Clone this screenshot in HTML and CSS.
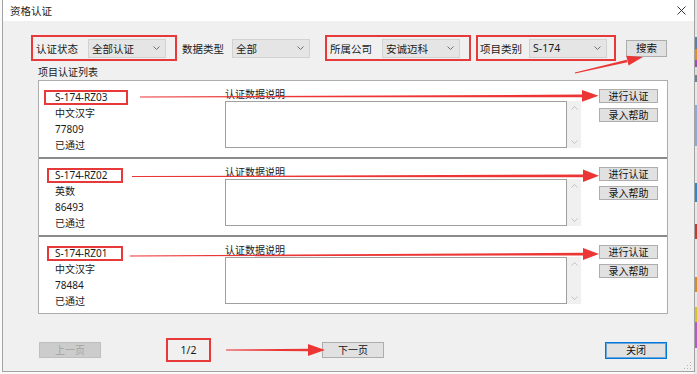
FILE: index.html
```html
<!DOCTYPE html>
<html lang="zh-CN">
  <head>
    <meta charset="utf-8">
    <title>资格认证</title>
    <link rel="stylesheet" href="styles.css">
  </head>
  <body>
    <div class="win">
      <div class="titlebar">
        <span class="title">资格认证</span>
        <svg class="x" width="9" height="9" viewBox="0 0 9 9"><path d="M0.5 0.5L8.5 8.5M8.5 0.5L0.5 8.5" stroke="#333" stroke-width="1" fill="none"/></svg>
      </div>
      <div class="content">
        <div class="filters">
          <div class="grp g1">
            <span class="lbl">认证状态</span>
            <div class="sel">全部认证<svg width="7" height="4" viewBox="0 0 7 4"><polyline points="0.5,0.5 3.5,3.5 6.5,0.5" fill="none" stroke="#707070"/></svg></div>
          </div>
          <span class="lbl l2">数据类型</span>
          <div class="sel s2">全部<svg width="7" height="4" viewBox="0 0 7 4"><polyline points="0.5,0.5 3.5,3.5 6.5,0.5" fill="none" stroke="#707070"/></svg></div>
          <div class="grp g2">
            <span class="lbl">所属公司</span>
            <div class="sel">安诚迈科<svg width="7" height="4" viewBox="0 0 7 4"><polyline points="0.5,0.5 3.5,3.5 6.5,0.5" fill="none" stroke="#707070"/></svg></div>
          </div>
          <div class="grp g3">
            <span class="lbl">项目类别</span>
            <div class="sel">S-174<svg width="7" height="4" viewBox="0 0 7 4"><polyline points="0.5,0.5 3.5,3.5 6.5,0.5" fill="none" stroke="#707070"/></svg></div>
          </div>
          <button type="button" class="btn search">搜索</button>
        </div>

        <div class="list-title">项目认证列表</div>
        <div class="list">
          <div class="panel">
            <div class="info">
              <div class="name n1">S-174-RZ03</div>
              <div>中文汉字</div>
              <div>77809</div>
              <div>已通过</div>
            </div>
            <div class="desc">
              <div class="desc-lbl">认证数据说明</div>
              <div class="desc-box">
                <div class="memo"></div>
                <div class="vscroll">
                  <svg width="7" height="4" viewBox="0 0 7 4"><polyline points="0.5,3.5 3.5,0.5 6.5,3.5" fill="none" stroke="#c2c2c2"/></svg>
                  <svg width="7" height="4" viewBox="0 0 7 4"><polyline points="0.5,0.5 3.5,3.5 6.5,0.5" fill="none" stroke="#c2c2c2"/></svg>
                </div>
              </div>
            </div>
            <div class="actions">
              <button type="button" class="btn small">进行认证</button>
              <button type="button" class="btn small">录入帮助</button>
            </div>
          </div>
          <div class="panel">
            <div class="info">
              <div class="name">S-174-RZ02</div>
              <div>英数</div>
              <div>86493</div>
              <div>已通过</div>
            </div>
            <div class="desc">
              <div class="desc-lbl">认证数据说明</div>
              <div class="desc-box">
                <div class="memo"></div>
                <div class="vscroll">
                  <svg width="7" height="4" viewBox="0 0 7 4"><polyline points="0.5,3.5 3.5,0.5 6.5,3.5" fill="none" stroke="#c2c2c2"/></svg>
                  <svg width="7" height="4" viewBox="0 0 7 4"><polyline points="0.5,0.5 3.5,3.5 6.5,0.5" fill="none" stroke="#c2c2c2"/></svg>
                </div>
              </div>
            </div>
            <div class="actions">
              <button type="button" class="btn small">进行认证</button>
              <button type="button" class="btn small">录入帮助</button>
            </div>
          </div>
          <div class="panel">
            <div class="info">
              <div class="name">S-174-RZ01</div>
              <div>中文汉字</div>
              <div>78484</div>
              <div>已通过</div>
            </div>
            <div class="desc">
              <div class="desc-lbl">认证数据说明</div>
              <div class="desc-box">
                <div class="memo"></div>
                <div class="vscroll">
                  <svg width="7" height="4" viewBox="0 0 7 4"><polyline points="0.5,3.5 3.5,0.5 6.5,3.5" fill="none" stroke="#c2c2c2"/></svg>
                  <svg width="7" height="4" viewBox="0 0 7 4"><polyline points="0.5,0.5 3.5,3.5 6.5,0.5" fill="none" stroke="#c2c2c2"/></svg>
                </div>
              </div>
            </div>
            <div class="actions">
              <button type="button" class="btn small">进行认证</button>
              <button type="button" class="btn small">录入帮助</button>
            </div>
          </div>
        </div>

        <div class="footer">
          <button type="button" class="btn wide prev" disabled>上一页</button>
          <span class="page">1/2</span>
          <button type="button" class="btn wide next">下一页</button>
          <button type="button" class="btn wide close">关闭</button>
        </div>
      </div>
    </div>

    <!-- annotation arrows drawn over the dialog -->
    <svg class="marks" width="697" height="374" viewBox="0 0 697 374">
      <g fill="#ec3535">
        <polygon points="575.1,73.4 574.9,72.6 626.7,59.7 627.3,62.3"/>
        <polygon points="626.3,55.8 643,57 628.5,65.6"/>
        <polygon points="140,96.6 583,94.6 583,97.2 140,97.4"/>
        <polygon points="582,90 598.5,95.8 582,101.8"/>
        <polygon points="132,176.1 583,174.6 583,177.2 132,176.9"/>
        <polygon points="583,169.5 599,175.8 583,182"/>
        <polygon points="130,255.6 583,252.8 583,255.4 130,256.4"/>
        <polygon points="583,248 599,254 583,260"/>
        <polygon points="226,349.6 309,348.7 309,351.3 226,350.4"/>
        <polygon points="308,344 325,350 308,356"/>
      </g>
      <g fill="#b4b4b4">
        <rect x="690" y="362" width="1" height="1"/>
        <rect x="687" y="365" width="1" height="1"/>
        <rect x="690" y="365" width="1" height="1"/>
        <rect x="684" y="368" width="1" height="1"/>
        <rect x="687" y="368" width="1" height="1"/>
        <rect x="690" y="368" width="1" height="1"/>
      </g>
    </svg>
  </body>
</html>
```

FILE: styles.css
```css
body {
  margin: 0;
  width: 697px;
  height: 374px;
  position: relative;
  overflow: hidden;
  font-family: "Noto Sans", "Noto Sans CJK SC", sans-serif;
  font-size: 10px;
  color: #1a1a1a;
  background:
    linear-gradient(to bottom, #e6e6e6 0 10%, #5c7fa6 10% 13%, #e4892d 13% 16%, #9a4fb0 16% 18%, #dcdcdc 18% 20%, #6d7f93 20% 22%, #e9e9e9 22% 28%, #8fa9cf 28% 39%, #e9e9e9 39% 49%, #2f86c8 49% 54%, #e9e9e9 54% 60%, #c2392f 60% 64%, #e9e9e9 64% 74%, #d68a2a 74% 78%, #e9e9e9 78% 82%, #d7c427 82% 86%, #b45bc4 86% 93%, #e9e9e9 93%) right top / 3px 100% no-repeat,
    #fafafa;
}

.win {
  margin-left: 2px;
  width: 691px;
  height: 371px;
  border: 1px solid #a3a3a3;
  border-top: 0;
  background: #f0f0f0;
}

.titlebar {
  height: 21px;
  background: #fff;
  display: flex;
  align-items: center;
  justify-content: space-between;
  padding: 0 8px 0 7px;
}
.title {
  font-size: 10.5px;
  color: #222;
}

.content {
  padding: 14px 26px 0 35px;
}

/* filter row */
.filters {
  display: flex;
  align-items: center;
  height: 26px;
  margin-left: -7px;
}
.grp {
  display: flex;
  align-items: center;
  height: 26px;
  box-sizing: border-box;
  border: 2px solid #e8393a;
}
.lbl {
  font-size: 10.5px;
  white-space: nowrap;
  flex: none;
}
.sel {
  width: 78px;
  height: 19px;
  box-sizing: border-box;
  flex: none;
  display: flex;
  align-items: center;
  justify-content: space-between;
  padding: 0 5px 0 3px;
  border: 1px solid #d2d2d2;
  background: #e5e5e5;
  font-size: 10.5px;
}
.g1 { padding: 0 9px 0 3px; }
.g1 .sel { margin-left: 10px; }
.l2 { margin-left: 5px; }
.s2 { margin-left: 8px; }
.g2 { margin-left: 15px; padding: 0 9px 0 3px; }
.g2 .sel { margin-left: 10px; }
.g3 { margin-left: 5px; padding: 0 7px 0 2px; }
.g3 .sel { margin-left: 7px; }

.btn {
  font-family: inherit;
  color: #111;
  background: #e1e1e1;
  border: 1px solid #adadad;
  padding: 0;
  box-sizing: border-box;
  line-height: 12px;
}
.search {
  margin-left: 10px;
  width: 41px;
  height: 17px;
  font-size: 10.5px;
}

/* item list */
.list-title {
  margin: 5px 0 2px;
  line-height: 12px;
}
.list {
  border: 1px solid #adadad;
  background: #fff;
}
.panel {
  height: 76px;
  display: flex;
}
.panel + .panel {
  border-top: 2px solid #8a8a8a;
}
.info {
  width: 186px;
  box-sizing: border-box;
  padding: 9px 0 0 16px;
  line-height: 16px;
  flex: none;
}
.name {
  width: max-content;
  line-height: 11px;
  border: 2px solid #e8393a;
  margin-left: -8px;
  padding: 0 14px 0 6px;
}
.name.n1 {
  margin-left: -11px;
  padding: 0 19px 0 9px;
}
.desc {
  width: 356px;
  padding-top: 7px;
  flex: none;
}
.desc-lbl {
  line-height: 12px;
}
.desc-box {
  display: flex;
  margin-top: 1px;
  height: 47px;
}
.memo {
  width: 342px;
  height: 47px;
  box-sizing: border-box;
  border: 1px solid #a0a0a0;
}
.vscroll {
  width: 14px;
  height: 47px;
  background: #f0f0f0;
  display: flex;
  flex-direction: column;
  justify-content: space-between;
  align-items: center;
  padding: 5px 0 4px;
  box-sizing: border-box;
}
.actions {
  margin-left: 18px;
  padding-top: 8px;
  display: flex;
  flex-direction: column;
  gap: 5px;
}
.small {
  width: 59px;
  height: 14px;
  font-size: 10px;
}

/* paging */
.footer {
  display: flex;
  align-items: center;
  height: 24px;
  margin-top: 24px;
}
.wide {
  width: 62px;
  height: 16px;
  font-size: 10px;
}
.prev {
  margin-left: 1px;
  background: #cccccc;
  border-color: #bfbfbf;
  color: #a3a3a3;
}
.page {
  margin-left: 65px;
  width: 45px;
  height: 24px;
  box-sizing: border-box;
  border: 2px solid #e8393a;
  display: flex;
  align-items: center;
  justify-content: center;
  font-size: 10.5px;
}
.next {
  margin-left: 111px;
}
.close {
  margin-left: auto;
  margin-right: 1px;
  height: 17px;
  border-color: #0078d7;
  box-shadow: inset 0 0 0 1px #6aa6dc;
}

.marks {
  position: absolute;
  left: 0;
  top: 0;
  pointer-events: none;
}
```
